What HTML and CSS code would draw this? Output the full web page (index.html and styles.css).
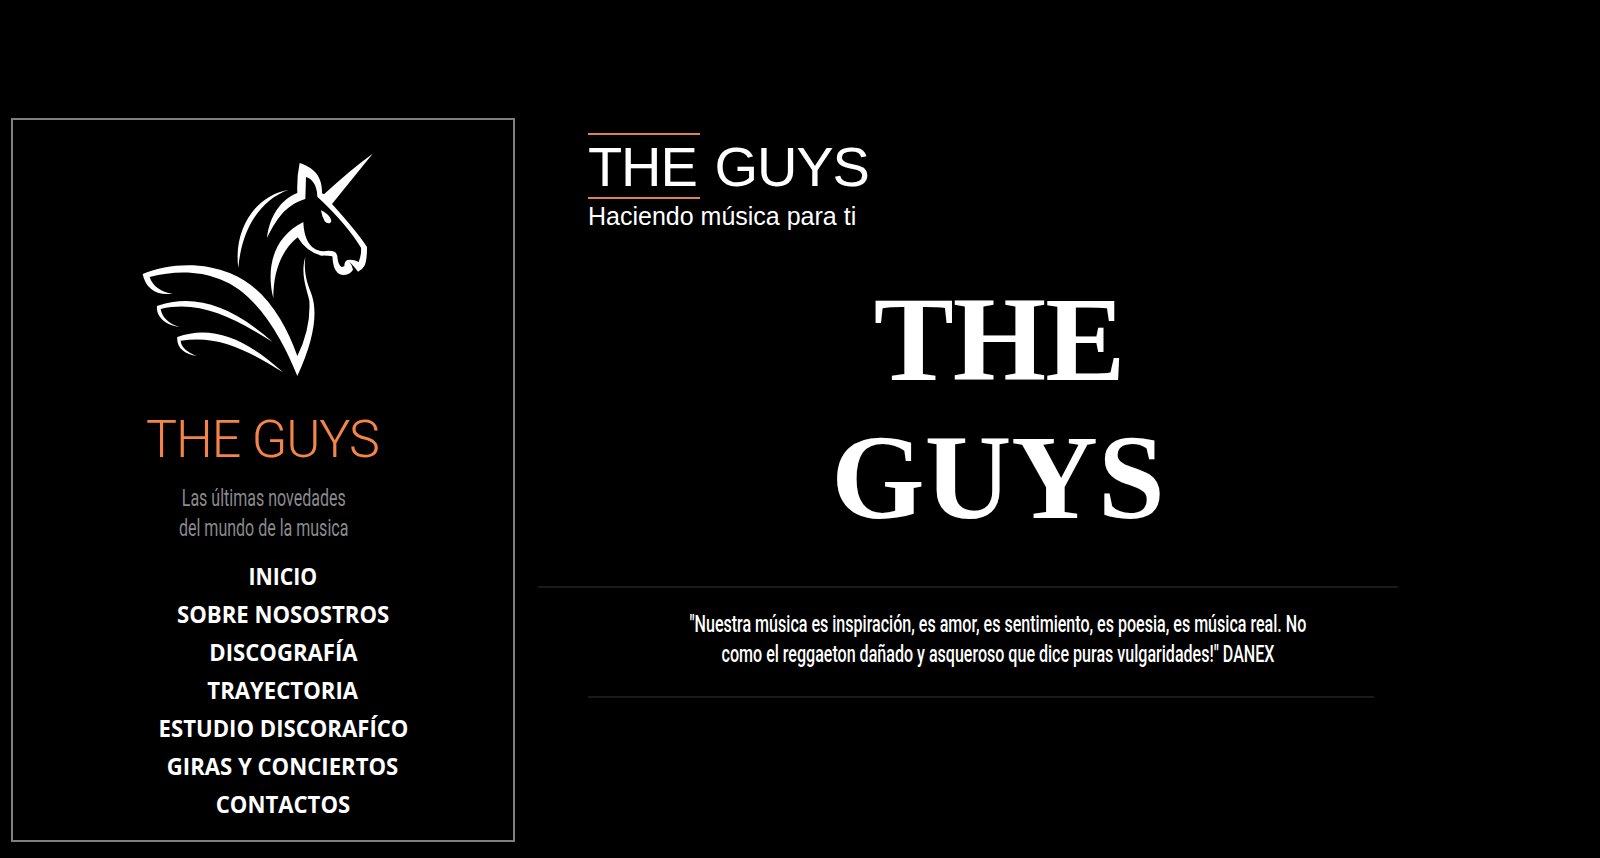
FILE: index.html
```html
<!DOCTYPE html>
<html lang="es">
<head>
<meta charset="utf-8">
<title>The Guys</title>
<link rel="stylesheet" href="styles.css">
</head>
<body>
<div class="page">
  <aside class="sidebar">
    <svg class="logo" viewBox="0 0 780 750" width="260" height="250" fill="#fff" aria-hidden="true">
      <path d="M728 41 L606 192 Q681 275 711 321 Q711 365 703 378 Q697 389 684 395 Q676 384 659 366 Q667 378 669 389 Q660 405 638 405 Q620 403 612 381 Q608 366 607 349 Q590 346 575 347 Q530 337 503 292 C452 333 430 397 430 475 C409 391 424 294 520 246 C522 290 535 330 580 334 Q600 329 615 336 Q623 342 623 358 Q626 377 635 381 L643 379 Q643 362 653 360 Q670 358 686 366 Q695 343 693 323 Q650 252 562 170 C562 142 550 117 528 111 L526 177 C475 193 446 223 411 294 C418 228 454 177 502 159 Q500 110 509 69 C548 82 578 106 576 160 L582 163 Q660 90 728 41Z"/>
      <path d="M573 211 C590 219 602 231 604 243 C602 252 591 252 584 244 Q576 231 573 211Z"/>
      <path d="M476 149 C393 179 335 263 325 384 C310 274 371 168 476 149Z"/>
      <path d="M38 402 C116 369 218 365 301 400 C404 441 465 545 502 648 Q543 565 538 482 C529 442 511 402 526 350 C520 402 533 432 545 464 C563 516 554 596 502 708 C461 607 387 462 270 418 C203 391 130 393 59 411 C67 437 92 457 128 461 C77 468 46 443 38 402Z"/>
      <path d="M81 498 C189 461 298 491 428 606 C301 527 204 481 92 507 C96 531 116 552 148 560 C110 558 77 531 81 498Z"/>
      <path d="M142 591 C245 553 349 596 459 697 C345 626 263 585 152 602 C153 620 170 637 200 647 C165 645 138 622 142 591Z"/>
    </svg>
    <h1 class="brand">THE GUYS</h1>
    <div class="tagline"><span>Las últimas novedades</span><span>del mundo de la musica</span></div>
    <nav class="menu">
      <a class="short">INICIO</a>
      <a>SOBRE NOSOSTROS</a>
      <a>DISCOGRAFÍA</a>
      <a>TRAYECTORIA</a>
      <a>ESTUDIO DISCORAFÍCO</a>
      <a>GIRAS Y CONCIERTOS</a>
      <a>CONTACTOS</a>
    </nav>
  </aside>
  <main class="content">
    <header class="masthead">
      <h2 class="title"><span class="lined">THE</span> GUYS</h2>
      <p class="subtitle">Haciendo música para ti</p>
    </header>
    <div class="hero"><div class="hero-top">THE</div><div>GUYS</div></div>
    <blockquote class="quote"><span>"Nuestra música es inspiración, es amor, es sentimiento, es poesia, es música real. No</span><span>como el reggaeton dañado y asqueroso que dice puras vulgaridades!" DANEX</span></blockquote>
    <div class="rule"></div>
  </main>
</div>
</body>
</html>
```
FILE: styles.css
```css
* { box-sizing: border-box; }
body { margin: 0; background: #000; color: #fff; overflow: hidden; }
h1, h2, p, blockquote { margin: 0; font-weight: normal; }
.page { display: flex; align-items: flex-start; height: 858px; padding: 118px 0 0 11px; }
.sidebar { width: 504px; height: 724px; border: 2px solid #808080; padding-top: 20px; }
.logo { display: block; margin-left: 117px; }
.brand { margin: 19px 0 0 133px; height: 62px; font: 300 52px/62px Roboto, sans-serif; letter-spacing: -1.1px; color: #f48549; white-space: nowrap; }
.tagline, .quote { display: flex; flex-direction: column; align-items: center; font: 23px/30px Roboto, sans-serif; white-space: nowrap; }
.tagline { margin-top: 13px; width: 501px; color: #8a8a8f; }
.tagline span { transform: scaleX(.696); }
.menu { display: flex; flex-direction: column; align-items: center; margin: 13px 0 0 40px; font: 700 24px/38px "Open Sans", sans-serif; white-space: nowrap; }
.menu a { transform: scaleX(.922); }
.menu .short { transform: scaleX(.885); }
.content { width: 860px; margin: 15px 0 0 23px; }
.masthead { padding-left: 50px; font-family: "Liberation Sans", Arial, sans-serif; }
.title { height: 66px; font-size: 56px; line-height: 66px; letter-spacing: -1.1px; }
.lined { display: inline-block; width: 112px; padding-top: 2px; line-height: 60px; border-top: 2px solid #e0824a; border-bottom: 2px solid #e0824a; }
.subtitle { padding-top: 2px; font-size: 25px; line-height: 30px; }
.hero { margin-top: 40px; padding-left: 60px; text-align: center; font: 700 120px/138px "Liberation Serif", "Times New Roman", serif; }
.hero-top { letter-spacing: -1px; padding-left: 2px; }
.quote { margin-top: 39px; height: 112px; border-top: 2px solid #1a1a1a; padding: 22px 0 0 60px; font-weight: 500; }
.quote span { transform: scaleX(.698); }
.rule { margin: -2px 24px 0 50px; border-top: 2px solid #1a1a1a; }
```
